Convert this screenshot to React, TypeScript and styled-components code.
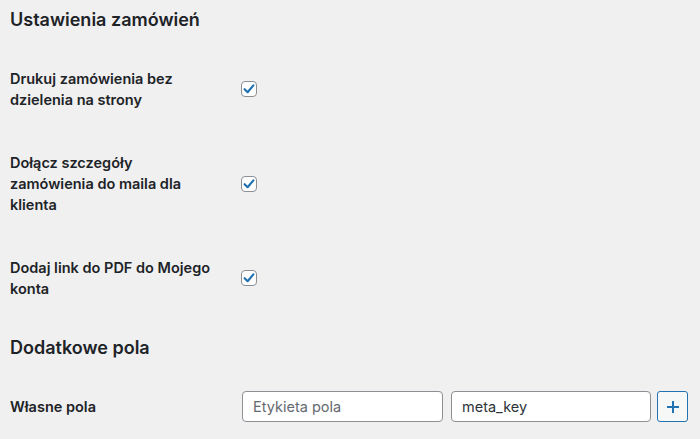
import React from "react";
import styled, { createGlobalStyle } from "styled-components";

const Global = createGlobalStyle`
  html, body { margin: 0; padding: 0; background: #f0f0f1; }
  body { font-family: Inter, "Noto Sans", "Liberation Sans", sans-serif; color: #1d2327; }
`;

const Page = styled.div`
  padding: 0 10px;
  width: 680px;
`;

const SectionTitle = styled.h2<{ $top: number }>`
  margin: ${(p) => p.$top}px 0 14px;
  font-size: 18px;
  line-height: 26px;
  font-weight: 600;
  color: #1d2327;
`;

const Row = styled.div<{ $pad: number }>`
  display: grid;
  grid-template-columns: 231px 1fr;
  align-items: center;
  padding: ${(p) => p.$pad}px 0;
`;

const Label = styled.div`
  font-size: 14.5px;
  line-height: 21px;
  font-weight: 600;
  color: #1d2327;
  width: 205px;
`;

const CheckBox = styled.span`
  width: 16px;
  height: 16px;
  box-sizing: border-box;
  border: 1px solid #8c8f94;
  border-radius: 4px;
  background: #fff;
  display: flex;
  align-items: center;
  justify-content: center;
`;

const Fields = styled.div`
  display: flex;
  align-items: center;
  padding-left: 1px;
`;

const Input = styled.input<{ $gap: number; $w: number }>`
  width: ${(p) => p.$w}px;
  height: 31px;
  box-sizing: border-box;
  border: 1px solid #8c8f94;
  border-radius: 4px;
  background: #fff;
  padding: 0 10px;
  margin-right: ${(p) => p.$gap}px;
  font-family: inherit;
  font-size: 14.5px;
  color: #2c3338;
  &::placeholder { color: #646970; opacity: 1; }
  &:focus { outline: none; }
`;

const AddButton = styled.button`
  width: 31px;
  height: 31px;
  box-sizing: border-box;
  border: 1px solid #2271b1;
  border-radius: 3px;
  background: #f6f7f7;
  padding: 0;
  display: flex;
  align-items: center;
  justify-content: center;
  cursor: pointer;
`;

const Check = () => (
  <CheckBox>
    <svg width="14" height="14" viewBox="0 0 14 14">
      <path d="M2.6 7.2 L5.6 10.2 L11.4 3.4" fill="none" stroke="#2271b1" strokeWidth="2.2" strokeLinecap="round" strokeLinejoin="round" />
    </svg>
  </CheckBox>
);

export default function App() {
  return (
    <Page>
      <Global />
      <SectionTitle $top={7}>Ustawienia zamówień</SectionTitle>
      <Row $pad={21}>
        <Label>Drukuj zamówienia bez dzielenia na strony</Label>
        <div><Check /></div>
      </Row>
      <Row $pad={21}>
        <Label>Dołącz szczegóły zamówienia do maila dla klienta</Label>
        <div><Check /></div>
      </Row>
      <Row $pad={21}>
        <Label>Dodaj link do PDF do Mojego konta</Label>
        <div><Check /></div>
      </Row>
      <SectionTitle $top={15}>Dodatkowe pola</SectionTitle>
      <Row $pad={16}>
        <Label>Własne pola</Label>
        <Fields>
          <Input $gap={8} $w={201} placeholder="Etykieta pola" readOnly />
          <Input $gap={6} $w={200} defaultValue="meta_key" readOnly />
          <AddButton aria-label="Dodaj">
            <svg width="14" height="14" viewBox="0 0 14 14">
              <path d="M7 1 V13 M1 7 H13" stroke="#2271b1" strokeWidth="2" />
            </svg>
          </AddButton>
        </Fields>
      </Row>
    </Page>
  );
}
